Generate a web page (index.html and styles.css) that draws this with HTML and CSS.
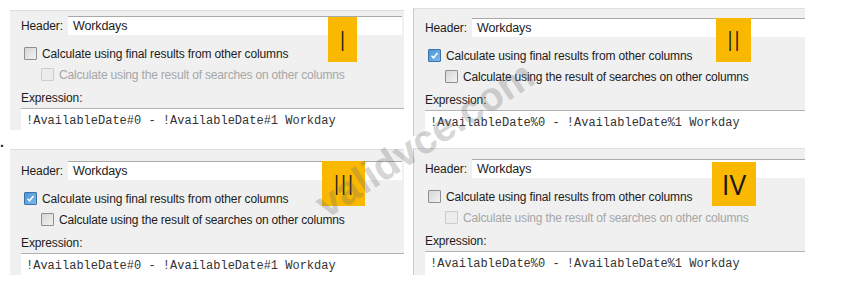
FILE: index.html
```html
<!DOCTYPE html>
<html lang="en">
<head>
    <meta charset="UTF-8">
    <title>Calculated column options</title>
    <link rel="stylesheet" href="styles.css">
</head>
<body>

    <div class="sheet">
        <div class="grid">

            <section class="panel panel-one">
                <div class="header-row">
                    <span class="label">Header:</span>
                    <div class="field">Workdays</div>
                </div>
                <div class="check">
                    <span class="box"></span>
                    <span>Calculate using final results from other columns</span>
                </div>
                <div class="check sub disabled">
                    <span class="box"></span>
                    <span>Calculate using the result of searches on other columns</span>
                </div>
                <div class="expr-label">Expression:</div>
                <div class="expr">!AvailableDate#0 - !AvailableDate#1 Workday</div>
                <div class="badge">I</div>
            </section>

            <section class="panel panel-two">
                <div class="header-row">
                    <span class="label">Header:</span>
                    <div class="field">Workdays</div>
                </div>
                <div class="check">
                    <span class="box checked">
                        <svg viewBox="0 0 13 13"><path d="M3 6.8 L5.4 9.2 L10 3.6" /></svg>
                    </span>
                    <span>Calculate using final results from other columns</span>
                </div>
                <div class="check sub">
                    <span class="box"></span>
                    <span>Calculate using the result of searches on other columns</span>
                </div>
                <div class="expr-label">Expression:</div>
                <div class="expr">!AvailableDate%0 - !AvailableDate%1 Workday</div>
                <div class="badge">II</div>
            </section>

            <section class="panel panel-three">
                <div class="header-row">
                    <span class="label">Header:</span>
                    <div class="field">Workdays</div>
                </div>
                <div class="check">
                    <span class="box checked">
                        <svg viewBox="0 0 13 13"><path d="M3 6.8 L5.4 9.2 L10 3.6" /></svg>
                    </span>
                    <span>Calculate using final results from other columns</span>
                </div>
                <div class="check sub">
                    <span class="box"></span>
                    <span>Calculate using the result of searches on other columns</span>
                </div>
                <div class="expr-label">Expression:</div>
                <div class="expr">!AvailableDate#0 - !AvailableDate#1 Workday</div>
                <div class="badge">III</div>
            </section>

            <section class="panel panel-four">
                <div class="header-row">
                    <span class="label">Header:</span>
                    <div class="field">Workdays</div>
                </div>
                <div class="check">
                    <span class="box"></span>
                    <span>Calculate using final results from other columns</span>
                </div>
                <div class="check sub disabled">
                    <span class="box"></span>
                    <span>Calculate using the result of searches on other columns</span>
                </div>
                <div class="expr-label">Expression:</div>
                <div class="expr">!AvailableDate%0 - !AvailableDate%1 Workday</div>
                <div class="badge">IV</div>
            </section>

        </div>

        <span class="stray">.</span>
        <span class="watermark">validvce.com</span>
    </div>

</body>
</html>
```

FILE: styles.css
```css
body {
    margin: 0;
    background: #ffffff;
    font-family: 'Liberation Sans', Arial, sans-serif;
    font-size: 12px;
    color: #1c1c1c;
}

.sheet {
    position: relative;
    width: 848px;
    height: 291px;
    overflow: hidden;
}

.grid {
    display: grid;
    grid-template-columns: 394px 392px;
    grid-template-rows: 128px 128px;
    column-gap: 9px;
    row-gap: 12px;
    padding: 8px 0 0 10px;
}

/* one options box */
.panel {
    position: relative;
    align-self: start;
    display: flex;
    flex-direction: column;
    background: #f0f0f0;
    border-top: 1px solid #dedede;
    padding-left: 11px;
    letter-spacing: -0.12px;
}

.panel-one {
    margin-top: 2px;
    padding-top: 5px;
}

.panel-two {
    padding-top: 9px;
    border-left: 1px solid #c9c9c9;
}

.panel-three {
    margin-top: 1px;
    padding-top: 11px;
}

.panel-four {
    padding-top: 10px;
    border-left: 1px solid #c9c9c9;
}

.header-row {
    display: flex;
    align-items: center;
    height: 19px;
}

.label {
    width: 47px;
    flex: none;
}

.field {
    flex: 1;
    height: 18px;
    line-height: 18px;
    padding-left: 5px;
    background: #ffffff;
    border-top: 1px solid #a9a9a9;
    margin-right: 2px;
    font-size: 12.5px;
}

.panel-two .field,
.panel-four .field {
    margin-right: 0;
}

.check {
    display: flex;
    align-items: center;
    height: 21px;
    padding-left: 3px;
    gap: 5px;
}

.header-row + .check {
    margin-top: 8px;
}

.check.sub {
    padding-left: 20px;
    letter-spacing: -0.18px;
}

.check.disabled {
    color: #a6a6a6;
}

.box {
    width: 11px;
    height: 11px;
    flex: none;
    border: 1px solid #8e8e8e;
    border-radius: 1px;
    background: linear-gradient(135deg, #d6d6d6, #f2f2f2);
}

.check.disabled .box {
    border-color: #cccccc;
    background: #ececec;
}

.box.checked {
    border-color: #3b73a8;
    background: linear-gradient(135deg, #4a98d8, #7db8e6);
}

.box svg {
    display: block;
    width: 11px;
    height: 11px;
    fill: none;
    stroke: #ffffff;
    stroke-width: 1.8;
}

.expr-label {
    height: 18px;
    line-height: 18px;
    margin-top: 4px;
}

.expr {
    margin-top: 1px;
    height: 22px;
    padding: 5px 0 0 5px;
    background: #ffffff;
    border-top: 1px solid #b4b4b4;
    font-family: 'Liberation Mono', 'Courier New', monospace;
    font-size: 12px;
    letter-spacing: 0;
    color: #333333;
    box-sizing: border-box;
}

.panel-two .expr {
    height: 26px;
}

.panel-four .expr {
    height: 24px;
}

/* yellow roman numeral tag */
.badge {
    position: absolute;
    display: flex;
    justify-content: center;
    align-items: center;
    height: 45px;
    background: #fab900;
    color: #1a1a1a;
    font-family: 'Open Sans', sans-serif;
    font-size: 28px;
    font-weight: 300;
    letter-spacing: 0;
}

.panel-one .badge {
    left: 318px;
    top: 6px;
    width: 29px;
}

.panel-two .badge {
    left: 302px;
    top: 9px;
    width: 35px;
    height: 44px;
}

.panel-three .badge {
    left: 312px;
    top: 11px;
    width: 43px;
}

.panel-four .badge {
    left: 298px;
    top: 13px;
    width: 44px;
    height: 44px;
    font-weight: 400;
}

.stray {
    position: absolute;
    left: 0;
    top: 134px;
    font-size: 14px;
    font-weight: bold;
}

.watermark {
    position: absolute;
    left: 299px;
    top: 117px;
    font-family: 'Liberation Sans', Arial, sans-serif;
    font-weight: bold;
    font-size: 40px;
    color: rgba(110, 110, 110, 0.3);
    transform: rotate(-33deg);
    transform-origin: center;
    white-space: nowrap;
}
```
